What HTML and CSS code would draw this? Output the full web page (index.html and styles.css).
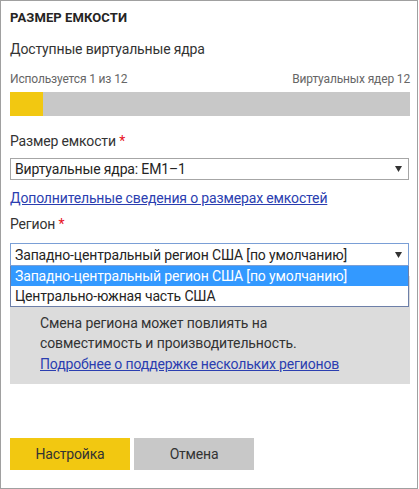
FILE: index.html
```html
<!DOCTYPE html>
<html lang="ru">
<head>
<meta charset="utf-8">
<title>Размер емкости</title>
<link rel="stylesheet" href="styles.css">
</head>
<body>
<div class="panel">
  <div class="title">РАЗМЕР ЕМКОСТИ</div>
  <div class="subtitle">Доступные виртуальные ядра</div>
  <div class="usage">
    <span>Используется 1 из 12</span>
    <span>Виртуальных ядер 12</span>
  </div>
  <div class="bar"><div class="bar-fill" style="width: 33px"></div></div>

  <div class="label label-first">Размер емкости <span class="req">*</span></div>
  <div class="select">
    <span>Виртуальные ядра: EM1–1</span>
    <svg class="caret" width="7" height="6" viewBox="0 0 7 6"><path d="M0 0H7L3.5 6Z" fill="#333"/></svg>
  </div>
  <a class="link link-sizes" href="#">Дополнительные сведения о размерах емкостей</a>

  <div class="label label-region">Регион <span class="req">*</span></div>
  <div class="select-wrap">
    <div class="select select-open">
      <span>Западно-центральный регион США [по умолчанию]</span>
      <svg class="caret" width="7" height="6" viewBox="0 0 7 6"><path d="M0 0H7L3.5 6Z" fill="#333"/></svg>
    </div>
    <ul class="options">
      <li class="option option-active">Западно-центральный регион США [по умолчанию]</li>
      <li class="option">Центрально-южная часть США</li>
    </ul>
  </div>

  <div class="notice">
    <div class="notice-hidden"></div>
    <p>Смена региона может повлиять на</p>
    <p>совместимость и производительность.</p>
    <p><a class="link" href="#">Подробнее о поддержке нескольких регионов</a></p>
  </div>

  <div class="buttons">
    <button class="btn btn-primary">Настройка</button>
    <button class="btn btn-secondary">Отмена</button>
  </div>
</div>
</body>
</html>
```

FILE: styles.css
```css
* { box-sizing: border-box; }
html, body { margin: 0; padding: 0; background: #fff; }
body {
  font-family: Roboto, "Noto Sans", sans-serif;
  color: #333;
}
.panel {
  width: 418px;
  height: 489px;
  border: 1px solid #a0a0a0;
  padding: 7px 7px 0 9px;
  display: flex;
  flex-direction: column;
}
.title {
  font-family: Roboto, "Liberation Sans", sans-serif;
  font-weight: 700;
  font-size: 13px;
  line-height: 20px;
  color: #252423;
  letter-spacing: 0.1px;
}
.subtitle {
  margin-top: 11px;
  font-size: 14px;
  letter-spacing: -0.15px;
  line-height: 20px;
  color: #333;
}
.usage {
  margin-top: 10px;
  display: flex;
  justify-content: space-between;
  font-size: 12px;
  letter-spacing: -0.15px;
  line-height: 20px;
  color: #666;
}
.bar {
  margin-top: 3px;
  height: 24px;
  background: #c8c8c8;
}
.bar-fill {
  height: 100%;
  background: #f2c811;
}
.label {
  font-size: 14px;
  letter-spacing: -0.15px;
  line-height: 20px;
  color: #333;
}
.label-first { margin-top: 15px; }
.label-region { margin-top: 6px; }
.req { color: #e81123; }
.select {
  margin-top: 7px;
  height: 22px;
  border: 1px solid #a6a6a6;
  display: flex;
  align-items: center;
  justify-content: space-between;
  padding: 0 6px 0 4px;
  font-size: 14px;
  letter-spacing: -0.15px;
  color: #252423;
  width: 399px;
}
.caret { flex: none; }
.link {
  color: #2b3eb0;
  text-decoration: underline;
  font-size: 14px;
  letter-spacing: -0.15px;
  line-height: 20px;
}
.link-sizes { margin-top: 8px; display: block; }
.select-wrap {
  position: relative;
  margin-top: 9px;
}
.select-open {
  margin-top: 0;
  height: 23px;
  border-color: #7a9fd6;
}
.options {
  position: absolute;
  left: 0;
  top: 23px;
  width: 399px;
  margin: 0;
  padding: 0;
  list-style: none;
  background: #fff;
  border: 1px solid #6d7fa8;
  border-top: none;
  z-index: 2;
}
.option {
  height: 20px;
  line-height: 20px;
  padding-left: 4px;
  font-size: 14px;
  letter-spacing: -0.15px;
  color: #252423;
}
.option-active {
  background: #3399ff;
  color: #fff;
}
.notice {
  margin-top: 10px;
  background: #dcdcdc;
  padding: 16px 8px 10px 30px;
  width: 400px;
}
.notice-hidden { height: 20.5px; }
.notice p {
  margin: 0;
  font-size: 14px;
  letter-spacing: -0.1px;
  line-height: 20.5px;
  color: #333;
  white-space: nowrap;
}
.buttons {
  margin-top: 54px;
  display: flex;
  gap: 4px;
}
.btn {
  width: 120px;
  height: 32px;
  border: none;
  font-family: Roboto, "Noto Sans", sans-serif;
  font-size: 14px;
  letter-spacing: -0.2px;
  color: #333;
  padding: 0;
}
.btn-primary { background: #f2c811; }
.btn-secondary { background: #c8c8c8; }
```
